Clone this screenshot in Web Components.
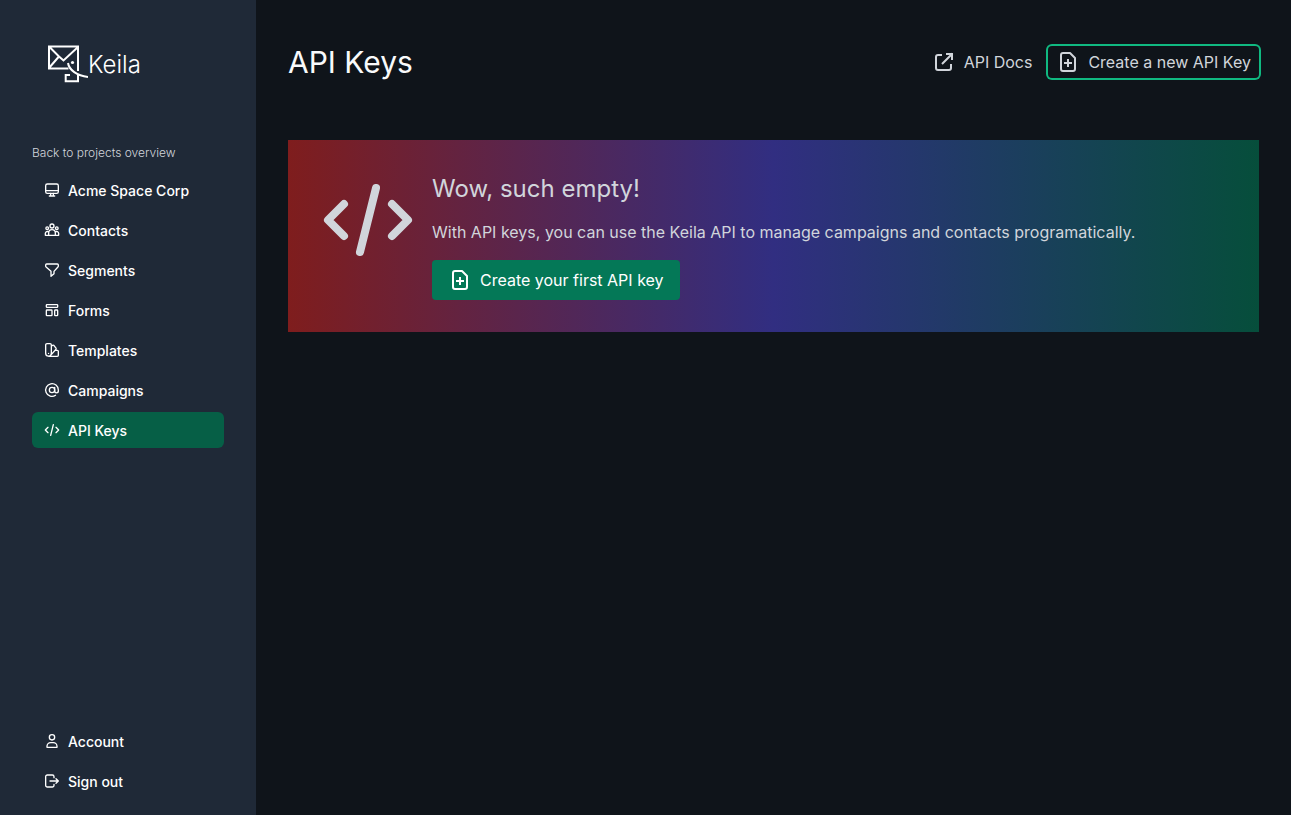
<!DOCTYPE html>
<html lang="en">
<head>
<meta charset="utf-8">
<meta name="viewport" content="width=device-width, initial-scale=1">
<title>API Keys - Keila</title>
<style>
body { margin: 0; font-family: Inter, "Liberation Sans", sans-serif; font-size: 16px; line-height: 24px; font-weight: 400; background: #0f141a; color: #d1d5db; }
</style>
</head>
<body>
<keila-app>
  <keila-sidebar slot="sidebar">
    <keila-nav-item icon="monitor" href="#project">Acme Space Corp</keila-nav-item>
    <keila-nav-item icon="users" href="#contacts">Contacts</keila-nav-item>
    <keila-nav-item icon="funnel" href="#segments">Segments</keila-nav-item>
    <keila-nav-item icon="layout" href="#forms">Forms</keila-nav-item>
    <keila-nav-item icon="swatch" href="#templates">Templates</keila-nav-item>
    <keila-nav-item icon="at" href="#campaigns">Campaigns</keila-nav-item>
    <keila-nav-item icon="code" href="#api-keys" active>API Keys</keila-nav-item>
    <keila-nav-item slot="bottom" icon="user" href="#account">Account</keila-nav-item>
    <keila-nav-item slot="bottom" icon="exit" href="#sign-out">Sign out</keila-nav-item>
  </keila-sidebar>
  <keila-page-header>
    API Keys
    <keila-action slot="actions" icon="external" href="#docs">API Docs</keila-action>
    <keila-action slot="actions" icon="file" href="#new" variant="outline">Create a new API Key</keila-action>
  </keila-page-header>
  <keila-empty-state icon="code">
    <span slot="title">Wow, such empty!</span>
    With API keys, you can use the Keila API to manage campaigns and contacts programatically.
    <keila-action slot="action" icon="file" href="#new" variant="solid">Create your first API key</keila-action>
  </keila-empty-state>
</keila-app>

<script>
const ICONS = {
  monitor: '<rect x="2.5" y="3" width="19" height="14" rx="2.5"/><path d="M3 13h18M10 17v4M14 17v4M8 21h8"/>',
  users: '<circle cx="12" cy="6" r="3"/><circle cx="4.8" cy="9.2" r="2"/><circle cx="19.2" cy="9.2" r="2"/><path d="M7 20v-3.500a5 5 0 0 1 10 0V20zM7 20H2v-3a3 3 0 0 1 5-2M17 20h5v-3a3 3 0 0 0-5-2"/>',
  funnel: '<path d="M4 3h16a1.500 1.500 0 0 1 1.500 1.500V6c0 .6-.3 1-.6 1.400L15 14v3.500L10.500 21.500V14L3.100 7.400C2.800 7 2.500 6.600 2.500 6V4.500A1.500 1.500 0 0 1 4 3z"/>',
  layout: '<rect x="3.500" y="4" width="17" height="4" rx="1"/><rect x="3.500" y="12" width="8.500" height="8.500" rx="1"/><rect x="16" y="12" width="4.500" height="8.500" rx="1"/>',
  swatch: '<path d="M4.500 2.500H9A2 2 0 0 1 11 4.500V17a4.250 4.250 0 0 1-8.500 0V4.500a2 2 0 0 1 2-2zM11 6.500l2-1.500a1.500 1.500 0 0 1 2 .3l3 4a1.500 1.500 0 0 1-.3 2L9.500 20.500M17.500 12.500H20a1.500 1.500 0 0 1 1.500 1.500v6a1.500 1.500 0 0 1-1.500 1.500H7M6.800 17v.1"/>',
  at: '<circle cx="12" cy="12" r="4"/><path d="M16 8v5.500a2.750 2.750 0 0 0 5.500 0V12a9.500 9.500 0 1 0-4.200 7.900"/>',
  code: '<path d="M6 8l-4 4 4 4M18 8l4 4-4 4M14 4l-4 16"/>',
  user: '<circle cx="12" cy="6.500" r="4"/><path d="M4.500 21.500V20a5.500 5.500 0 0 1 5.500-5.500h4a5.500 5.500 0 0 1 5.500 5.500v1.500z"/>',
  exit: '<path d="M15 7V5.500A2.500 2.500 0 0 0 12.500 3H5a2.500 2.500 0 0 0-2.500 2.500v13A2.500 2.500 0 0 0 5 21h7.500a2.500 2.500 0 0 0 2.500-2.500V17M9 12h12.500M18 8.500l3.500 3.500-3.500 3.500"/>',
  external: '<path d="M10 5H6a2 2 0 0 0-2 2v11a2 2 0 0 0 2 2h11a2 2 0 0 0 2-2v-4M10 14L20.500 3.500M14 4h6v6" stroke-linecap="butt" stroke-linejoin="miter"/>',
  file: '<path d="M7 3h7l5 5v11a2 2 0 0 1-2 2H7a2 2 0 0 1-2-2V5a2 2 0 0 1 2-2zM12 9v8M8 13h8" stroke-linecap="butt"/>'
};
const svg = name => `<svg viewBox="0 0 24 24" fill="none" stroke="currentColor" stroke-width="2" stroke-linecap="round" stroke-linejoin="round" aria-hidden="true">${ICONS[name] || ''}</svg>`;

function define(name, render) {
  customElements.define(name, class extends HTMLElement {
    constructor() { super(); this.attachShadow({ mode: 'open' }); }
    connectedCallback() { this.shadowRoot.innerHTML = render(this); }
  });
}

define('keila-app', () => `
<style>
:host { display: flex; min-height: 100vh; }
main { flex: 1; min-width: 0; padding: 44px 32px 32px; }
</style>
<slot name="sidebar"></slot>
<main><slot></slot></main>`);

define('keila-logo', () => `
<style>
:host { display: block; }
a { display: flex; align-items: center; color: #fff; text-decoration: none; font-size: 24px; line-height: 32px; font-weight: 300; }
svg { width: 40px; height: 40px; }
span { padding-top: 2px; }
</style>
<a href="#home"><svg viewBox="0 0 40 40" fill="none" stroke="currentColor" stroke-width="2" aria-hidden="true">
<path d="M20.500 24.500H1V2.500H30V27M1 2.500L11 12.500 15.500 16.500 30 3M1 24L10.500 13"/>
<path d="M20 19C21 26 29 31.500 40 33M30 31V37.300H17.700V31H22"/>
<circle cx="24.500" cy="18.500" r="1.600" fill="currentColor" stroke="none"/></svg><span>Keila</span></a>`);

define('keila-sidebar', () => `
<style>
:host { display: flex; flex-direction: column; box-sizing: border-box; flex: 0 0 256px; padding: 44px 32px 16px; background: #1f2937; }
keila-logo { padding-left: 16px; margin-bottom: 61px; }
.back { color: #d1d5db; text-decoration: none; font-size: 12px; line-height: 16px; font-weight: 300; margin-bottom: 11px; }
nav { display: flex; flex-direction: column; gap: 4px; }
.bottom { margin-top: auto; }
</style>
<keila-logo></keila-logo>
<a class="back" href="#projects">Back to projects overview</a>
<nav><slot></slot></nav>
<nav class="bottom"><slot name="bottom"></slot></nav>`);

define('keila-nav-item', el => `
<style>
:host { display: block; }
a { display: flex; align-items: center; gap: 8px; padding: 9px 12px 7px; border-radius: 6px; color: #fff; text-decoration: none; font-size: 14px; line-height: 20px; font-weight: 500; }
:host([active]) a { background: #065f46; }
svg { width: 16px; height: 16px; margin-bottom: 2px; }
</style>
<a href="${el.getAttribute('href')}"${el.hasAttribute('active') ? ' aria-current="page"' : ''}>${svg(el.getAttribute('icon'))}<span><slot></slot></span></a>`);

define('keila-page-header', () => `
<style>
:host { display: flex; align-items: center; justify-content: space-between; margin-bottom: 60px; }
h1 { margin: 0; font-size: 30px; line-height: 36px; font-weight: 400; color: #f9fafb; }
.actions { display: flex; gap: 8px; }
</style>
<h1><slot></slot></h1>
<div class="actions"><slot name="actions"></slot></div>`);

define('keila-action', el => `
<style>
:host { display: block; }
a { display: inline-flex; align-items: center; gap: 8px; padding: 4px 8px; border-radius: 4px; color: #d1d5db; text-decoration: none; vertical-align: top; }
:host([variant="outline"]) a { box-shadow: 0 0 0 2px #10b981; }
:host([variant="solid"]) a { padding: 8px 16px; background: #047857; color: #fff; }
svg { width: 24px; height: 24px; }
</style>
<a href="${el.getAttribute('href')}">${svg(el.getAttribute('icon'))}<span><slot></slot></span></a>`);

define('keila-empty-state', el => `
<style>
:host { display: flex; gap: 16px; padding: 32px; background: linear-gradient(to right, #7f1d1d, #312e81, #064e3b); }
svg { width: 96px; height: 96px; flex: none; }
.body { display: flex; flex-direction: column; }
h2 { margin: 0; padding: 1px 0 15px; font-size: 24px; line-height: 32px; font-weight: 400; }
p { margin: 0 0 16px; }
</style>
${svg(el.getAttribute('icon'))}
<div class="body"><h2><slot name="title"></slot></h2><p><slot></slot></p><slot name="action"></slot></div>`);
</script>
</body>
</html>
